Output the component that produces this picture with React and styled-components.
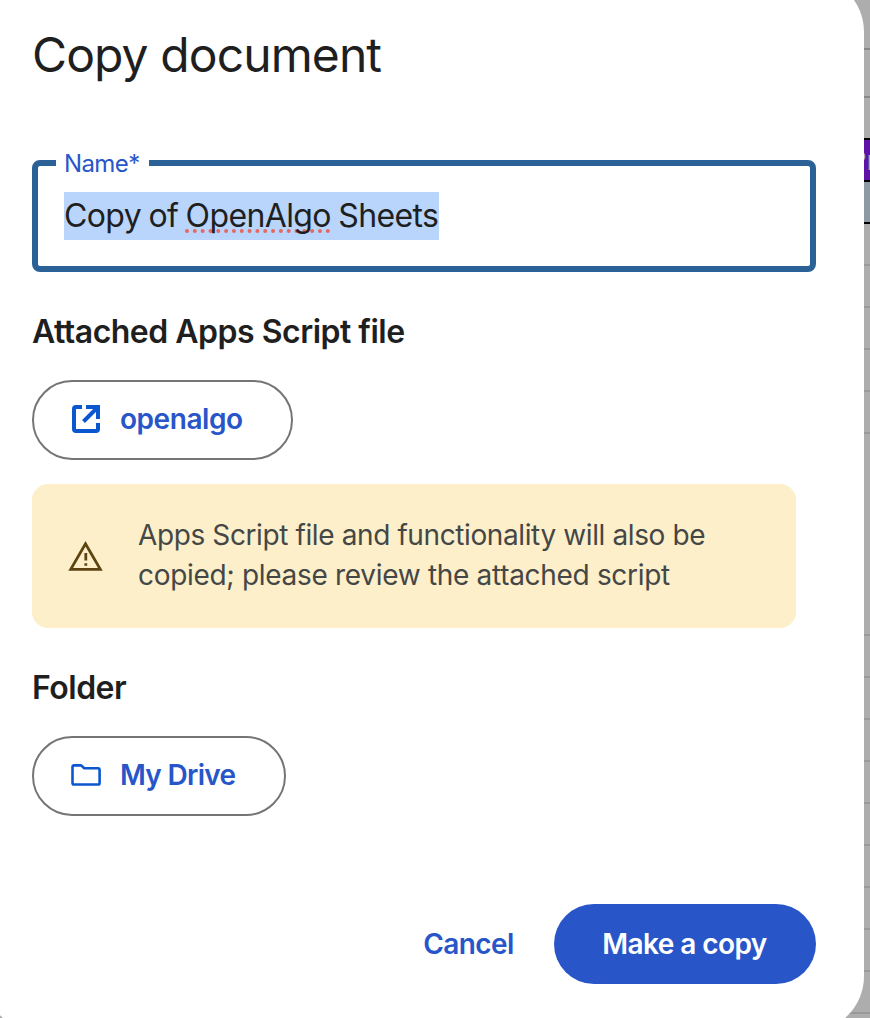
import React from "react";
import styled, { createGlobalStyle } from "styled-components";

const GlobalStyle = createGlobalStyle`
  * { box-sizing: border-box; }
  body { margin: 0; background: #adadad; }
`;

const Screen = styled.div`
  position: relative;
  width: 870px;
  height: 1018px;
  overflow: hidden;
  background: #adadad;
  font-family: Inter, Roboto, "Liberation Sans", sans-serif;
`;

const Sheet = styled.div`
  display: flex;
  flex-direction: column;
`;

const SheetRow = styled.div`
  flex: none;
  height: ${(p) => p.$height}px;
  background: ${(p) => p.$fill || "#adadad"};
  border-bottom: 2px solid ${(p) => p.$line || "#999999"};
  padding-left: 848px;
  color: #adadad;
  font-family: "Liberation Sans", Arial, sans-serif;
  font-size: 28px;
  line-height: 42px;
  white-space: nowrap;
  overflow: hidden;
`;

const Dialog = styled.section`
  position: absolute;
  top: -24px;
  left: -16px;
  width: 880px;
  height: 1056px;
  padding: 48px;
  border-radius: 56px;
  background: #ffffff;
  display: flex;
  flex-direction: column;
  align-items: flex-start;
`;

const Title = styled.h1`
  margin: 0 0 72px;
  height: 64px;
  font-size: 48px;
  line-height: 62px;
  font-weight: 400;
  letter-spacing: -0.9px;
  color: #1f1f1f;
  white-space: nowrap;
`;

const Field = styled.fieldset`
  margin: -8px 0 0;
  width: 784px;
  height: 120px;
  padding: 0 26px;
  border: 6px solid #2a6197;
  border-radius: 8px;
  min-width: 0;
`;

const FieldLabel = styled.legend`
  margin-left: -8px;
  padding: 0 8px;
  width: 93px;
  height: 22px;
  font-size: 24px;
  line-height: 24px;
  letter-spacing: -0.6px;
  color: #2856c9;
  white-space: nowrap;
`;

const FieldValue = styled.div`
  margin-top: 18px;
  display: inline-block;
  width: 375px;
  height: 48px;
  background: #b9d5fb;
  color: #1f1f1f;
  font-size: 32px;
  line-height: 48px;
  letter-spacing: -0.62px;
  word-spacing: -1px;
  white-space: nowrap;
`;

const Misspelled = styled.span`
  text-decoration: underline dotted #e46962 4px;
  text-underline-offset: 2px;
  text-decoration-skip-ink: none;
`;

const Heading = styled.h2`
  margin: 36px 0 24px;
  height: 48px;
  font-size: 32px;
  line-height: 48px;
  font-weight: 600;
  letter-spacing: -0.5px;
  color: #1f1f1f;
  white-space: nowrap;
`;

const Chip = styled.button`
  display: flex;
  align-items: center;
  gap: 19px;
  width: ${(p) => p.$width}px;
  height: 80px;
  padding: 0 0 0 37px;
  border: 2px solid #747575;
  border-radius: 40px;
  background: #ffffff;
  color: #2856c9;
  font: 600 28px/40px Inter, Roboto, sans-serif;
  letter-spacing: ${(p) => p.$track}px;
  white-space: nowrap;

  svg { flex: none; }
`;

const ChipLabel = styled.span`
  padding-bottom: 2px;
`;

const Notice = styled.div`
  display: flex;
  align-items: center;
  gap: 35px;
  width: 764px;
  height: 144px;
  margin-top: 24px;
  padding-left: 36px;
  border-radius: 16px;
  background: #fcefc9;
  svg { flex: none; }
`;

const NoticeText = styled.p`
  margin: 0;
  padding-bottom: 2px;
  font-size: 28px;
  line-height: 40px;
  color: #444746;
  white-space: nowrap;
`;

const NoticeLine = styled.span`
  display: block;
  letter-spacing: ${(p) => p.$track}px;
`;

const Actions = styled.div`
  display: flex;
  align-self: flex-end;
  gap: 16px;
  margin-top: 88px;
`;

const Action = styled.button`
  width: ${(p) => p.$width}px;
  height: 80px;
  padding: 0 1px 0 0;
  border: 0;
  border-radius: 40px;
  background: ${(p) => (p.$primary ? "#2856c9" : "transparent")};
  color: ${(p) => (p.$primary ? "#ffffff" : "#2856c9")};
  font: 600 28px/40px Inter, Roboto, sans-serif;
  letter-spacing: -0.58px;
  white-space: nowrap;
`;

const OpenIcon = () => (
  <svg width="30" height="30" viewBox="71 405 30 30" fill="none" stroke="#0b57d0" strokeWidth="4">
    <path d="M82 407H76Q74 407 74 409V429Q74 431 76 431H96Q98 431 98 429V423" />
    <path d="M86 407H98V419M98 407L83.5 421.5" />
  </svg>
);

const FolderIcon = () => (
  <svg width="30" height="30" viewBox="71 761 30 30" fill="none" stroke="#0b57d0" strokeWidth="2.6" strokeLinejoin="round">
    <path d="M74.3 765.4H81.2L84.2 768.3H98Q99.6 768.3 99.6 769.9V782.9Q99.6 784.5 98 784.5H74.3Q72.5 784.5 72.5 782.9V767Q72.5 765.4 74.3 765.4Z" />
  </svg>
);

const WarningIcon = () => (
  <svg width="35" height="30" viewBox="68 541 35 30" fill="none" stroke="#5c4310" strokeWidth="2.8">
    <path d="M70.7 569.4L85.5 543.9L100.3 569.4Z" />
    <path d="M85.8 553V560.6M85.8 563.2V565.8" />
  </svg>
);

const bodyRows = [42, 42, 42, 42, 42, 202, 42, 42, 42, 42, 42, 42, 42, 42, 42];

export default function App() {
  return (
    <Screen>
      <GlobalStyle />
      <Sheet>
        <SheetRow $height={50} $line="#878787" />
        <SheetRow $height={48} $line="#878787" />
        <SheetRow $height={42} $line="#000000" />
        <SheetRow $height={42} $line="#000000" $fill="#5f12a6">Pr</SheetRow>
        <SheetRow $height={42} $line="#000000" $fill="#8e9aa3" />
        {bodyRows.map((height, i) => (
          <SheetRow key={i} $height={height} />
        ))}
      </Sheet>
      <Dialog>
        <Title>Copy document</Title>
        <Field>
          <FieldLabel>Name*</FieldLabel>
          <FieldValue>
            Copy of <Misspelled>OpenAlgo</Misspelled> Sheets
          </FieldValue>
        </Field>
        <Heading>Attached Apps Script file</Heading>
        <Chip $width={261} $track={-0.45}>
          <OpenIcon />
          <ChipLabel>openalgo</ChipLabel>
        </Chip>
        <Notice>
          <WarningIcon />
          <NoticeText>
            <NoticeLine $track={-0.39}>Apps Script file and functionality will also be</NoticeLine>
            <NoticeLine $track={-0.31}>copied; please review the attached script</NoticeLine>
          </NoticeText>
        </Notice>
        <Heading>Folder</Heading>
        <Chip $width={254} $track={-0.7}>
          <FolderIcon />
          <ChipLabel>My Drive</ChipLabel>
        </Chip>
        <Actions>
          <Action $width={138}>Cancel</Action>
          <Action $width={262} $primary>Make a copy</Action>
        </Actions>
      </Dialog>
    </Screen>
  );
}
